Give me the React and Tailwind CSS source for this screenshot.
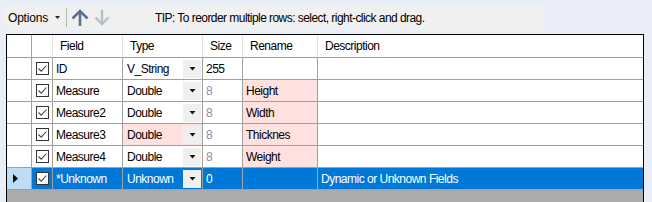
import React from 'react';

const rows = [
  { field: 'ID', type: 'V_String', size: '255', rename: '', desc: '' },
  { field: 'Measure', type: 'Double', size: '8', rename: 'Height', desc: '', renamePink: true, dim: true },
  { field: 'Measure2', type: 'Double', size: '8', rename: 'Width', desc: '', renamePink: true, dim: true },
  { field: 'Measure3', type: 'Double', size: '8', rename: 'Thicknes', desc: '', renamePink: true, typePink: true, dim: true },
  { field: 'Measure4', type: 'Double', size: '8', rename: 'Weight', desc: '', renamePink: true, dim: true },
  { field: '*Unknown', type: 'Unknown', size: '0', rename: '', desc: 'Dynamic or Unknown Fields', selected: true },
];

function CheckBox() {
  return (
    <div className="w-[13px] h-[13px] border border-[#333] bg-white flex items-center justify-center">
      <svg width="11" height="11" viewBox="0 0 11 11">
        <path d="M1.5 5.5 L4.2 8.2 L9.5 2.5" fill="none" stroke="#444" strokeWidth="1.1" />
      </svg>
    </div>
  );
}

function DropButton() {
  return (
    <div className="w-[18px] h-[18px] bg-[#efefef] flex items-center justify-center">
      <svg width="7" height="4" viewBox="0 0 7 4">
        <path d="M0.5 0 L6.5 0 L3.5 3.5 Z" fill="#111" />
      </svg>
    </div>
  );
}

function Row({ r }) {
  const sel = r.selected;
  const text = sel ? 'text-white' : 'text-black';
  const cell = sel ? 'bg-[#0078d7]' : 'bg-white';
  return (
    <div className={`flex h-[22px] border-b border-[#a0a0a0] ${text}`}>
      <div className={`w-[25px] shrink-0 border-r border-[#a0a0a0] flex items-center pl-[6px] ${sel ? 'bg-[#bfdcf5]' : 'bg-white'}`}>
        {sel && (
          <svg width="6" height="9" viewBox="0 0 6 9">
            <path d="M0 0 L5 4.5 L0 9 Z" fill="#111" />
          </svg>
        )}
      </div>
      <div className={`w-[21px] shrink-0 border-r border-[#a0a0a0] flex items-center justify-center ${cell}`}>
        <CheckBox />
      </div>
      <div className={`w-[70px] shrink-0 border-r border-[#a0a0a0] flex items-center pl-[3px] ${cell}`}>{r.field}</div>
      <div className={`w-[80px] shrink-0 border-r border-[#a0a0a0] flex items-center justify-between pl-[4px] pr-[1px] ${sel ? cell : r.typePink ? 'bg-[#ffe2e0]' : 'bg-white'}`}>
        <span>{r.type}</span>
        <DropButton />
      </div>
      <div className={`w-[40px] shrink-0 border-r border-[#a0a0a0] flex items-center pl-[3px] ${cell} ${r.dim && !sel ? 'text-[#8790a0]' : ''}`}>{r.size}</div>
      <div className={`w-[75px] shrink-0 border-r border-[#a0a0a0] flex items-center pl-[3px] ${sel ? cell : r.renamePink ? 'bg-[#ffe2e0]' : 'bg-white'}`}>{r.rename}</div>
      <div className={`flex-1 flex items-center pl-[3px] ${cell}`}>{r.desc}</div>
    </div>
  );
}

export default function App() {
  return (
    <div
      className="w-[652px] h-[202px] bg-[#eaeef8] overflow-hidden text-[12px] leading-none tracking-[-0.5px]"
      style={{ fontFamily: '"Liberation Sans", Arial, sans-serif' }}
    >
      {/* toolbar */}
      <div className="pt-[5px] pl-[3px]">
        <div className="w-[542px] h-[25px] bg-[#f0f0f0] flex items-center">
          <div className="flex items-center pl-[5px] text-black tracking-[-0.2px]">
            <span>Options</span>
            <svg className="ml-[7px]" width="5" height="3" viewBox="0 0 5 3">
              <path d="M0 0 L5 0 L2.5 3 Z" fill="#222" />
            </svg>
          </div>
          <div className="ml-[6px] w-px h-[19px] bg-[#b5b5b5]" />
          <svg className="ml-[4px]" width="18" height="18" viewBox="0 0 18 18">
            <path d="M9 17 V3 M1.5 9.5 L9 2 L16.5 9.5" fill="none" stroke="#5a708f" strokeWidth="2.6" />
          </svg>
          <svg className="ml-[5px]" width="16" height="18" viewBox="0 0 16 18">
            <path d="M8 1 V15 M1.5 8.5 L8 15 L14.5 8.5" fill="none" stroke="#b4bfcf" strokeWidth="2.4" />
          </svg>
          <span className="ml-[45px] text-black tracking-[-0.55px]">TIP: To reorder multiple rows: select, right-click and drag.</span>
        </div>
      </div>

      {/* grid */}
      <div className="ml-[6px] mt-[4px] w-[638px] h-[200px] border border-black bg-[#ababab]">
        <div className="flex h-[23px] bg-white border-b border-[#a0a0a0] text-black">
          <div className="w-[25px] shrink-0 border-r border-[#a0a0a0]" />
          <div className="w-[21px] shrink-0 border-r border-[#e3e3e3]" />
          <div className="w-[70px] shrink-0 border-r border-[#e3e3e3] flex items-center pl-[7px]">Field</div>
          <div className="w-[80px] shrink-0 border-r border-[#e3e3e3] flex items-center pl-[7px]">Type</div>
          <div className="w-[40px] shrink-0 border-r border-[#e3e3e3] flex items-center pl-[7px]">Size</div>
          <div className="w-[75px] shrink-0 border-r border-[#e3e3e3] flex items-center pl-[7px]">Rename</div>
          <div className="flex-1 flex items-center pl-[7px]">Description</div>
        </div>
        {rows.map((r) => (
          <Row key={r.field} r={r} />
        ))}
      </div>
    </div>
  );
}
